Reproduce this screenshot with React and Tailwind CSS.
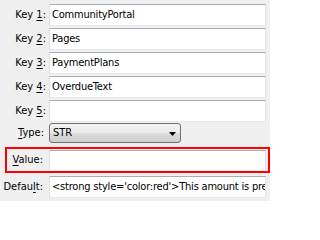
import React from "react";

const font = { fontFamily: "Tahoma, 'DejaVu Sans Condensed', 'DejaVu Sans', sans-serif" };

function Box({ children, className = "" }) {
  return (
    <div
      className={`shrink-0 flex items-center bg-white border border-t-[#abadb3] border-x-[#dfe3e9] border-b-[#e3e9ef] pl-[2px] overflow-hidden whitespace-nowrap text-[11px] tracking-[-0.2px] text-black ${className}`}
    >
      {children}
    </div>
  );
}

function Label({ pre, u, post, className = "" }) {
  return (
    <div className={`text-right text-[11px] text-black whitespace-nowrap pr-[3px] ${className}`}>
      {pre}
      <span className="underline underline-offset-[2px]">{u}</span>
      {post}
    </div>
  );
}

function Row({ label, value, className = "" }) {
  return (
    <div className={`flex items-center h-[22px] w-[270px] ${className}`}>
      <div className="w-[49px] shrink-0">{label}</div>
      <Box className="w-[217px] h-[22px]">{value}</Box>
    </div>
  );
}

export default function App() {
  return (
    <div className="w-[270px] h-[201px] bg-[#f0f0f0] overflow-hidden pt-[4px]" style={font}>
      <Row label={<Label pre="Key " u="1" post=":" />} value="CommunityPortal" className="mb-[2px]" />
      <Row label={<Label pre="Key " u="2" post=":" />} value="Pages" className="mb-[2px]" />
      <Row label={<Label pre="Key " u="3" post=":" />} value="PaymentPlans" className="mb-[2px]" />
      <Row label={<Label pre="Key " u="4" post=":" />} value="OverdueText" className="mb-[2px]" />
      <Row label={<Label pre="Key " u="5" post=":" />} value="" className="mb-[1px]" />
      <div className="flex items-center h-[20px] w-[270px]">
        <div className="w-[49px] shrink-0">
          <Label pre="" u="T" post="ype:" className="pr-[5px]" />
        </div>
        <div className="relative shrink-0 w-[132px] h-[20px] rounded-[3px] border border-[#707070] bg-[linear-gradient(to_bottom,#f2f2f2_0%,#ebebeb_50%,#dddddd_50%,#cfcfcf_100%)] flex items-center pl-[3px] text-[11px] text-black">
          STR
          <svg className="absolute right-[4px] top-[8px]" width="7" height="4" viewBox="0 0 7 4">
            <path d="M0 0 H7 L3.5 4 Z" fill="#000" />
          </svg>
        </div>
      </div>
      <div className="mt-[4px] ml-[5px] w-[265px] h-[26px] border-2 border-[#ff0000] flex items-center">
        <div className="w-[42px] shrink-0">
          <Label pre="" u="V" post="alue:" className="pr-[6px]" />
        </div>
        <Box className="w-[217px] h-[21px]" />
      </div>
      <Row
        label={<Label pre="Defau" u="l" post="t:" className="pr-[6px]" />}
        value="<strong style='color:red'>This amount is pre"
        className="mt-[3px]"
      />
    </div>
  );
}
